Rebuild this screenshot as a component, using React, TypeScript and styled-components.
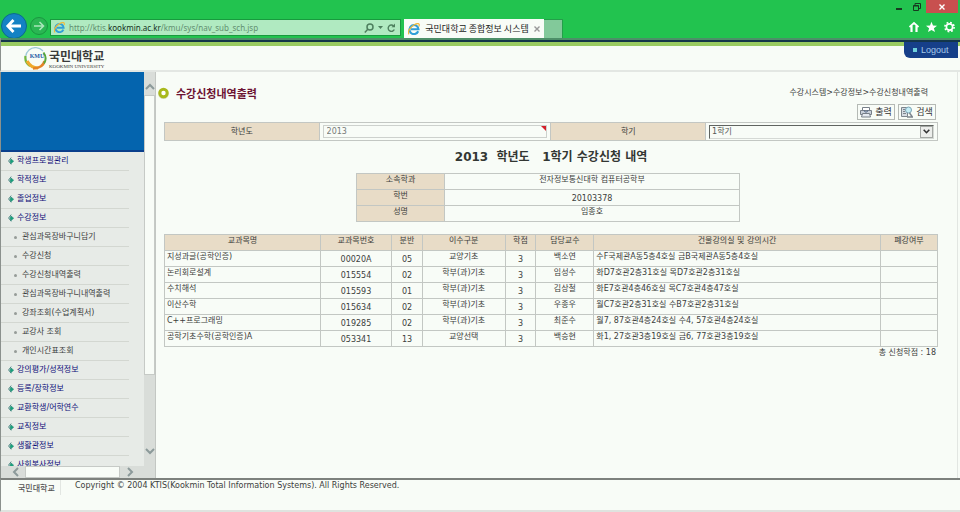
import React from "react";
import styled, { createGlobalStyle } from "styled-components";

const GlobalStyle = createGlobalStyle`
  *, *::before, *::after { box-sizing: border-box; }
  html, body, #root { height: 100%; margin: 0; }
  body {
    background: #f8fcf7;
    color: #3c403c;
    font: 8px/12px "DejaVu Sans", "Noto Sans CJK KR", sans-serif;
    overflow: hidden;
  }
  button, input, select { font: inherit; color: inherit; margin: 0; padding: 0; border: 0; background: none; }
  a { color: inherit; text-decoration: none; }
  h1, h2, p, ul { margin: 0; padding: 0; font-size: inherit; }
  svg { display: block; flex: none; }
`;

const Window = styled.div`
  display: grid;
  grid-template-rows: 38px 34px minmax(0, 1fr) 34px;
  height: 100vh;
`;

/* ---------- browser frame ---------- */

const Chrome = styled.header`
  display: flex;
  align-items: flex-end;
  justify-content: space-between;
  background: #22c34f;
`;

const NavGroup = styled.div`
  display: flex;
  align-items: flex-end;
  flex: 1;
`;

const RoundButtons = styled.div`
  display: flex;
  align-items: center;
  width: 50px;
  height: 24px;
`;

const IconButton = styled.button`
  display: flex;
  align-items: center;
  justify-content: center;
`;

const AddressBar = styled.div`
  display: flex;
  align-items: center;
  gap: 4px;
  flex: 0 1 351px;
  height: 17px;
  margin-bottom: 2px;
  padding: 0 4px 0 3px;
  background: #b0eac1;
  border: 1px solid #189a3e;
`;

const Url = styled.span`
  flex: 1;
  color: #628f70;
  font: 8px/14px "Noto Sans", sans-serif;
  white-space: nowrap;
  b { color: #14301c; font-weight: 400; }
`;

const Tab = styled.div`
  display: flex;
  align-items: center;
  justify-content: space-between;
  width: 140px;
  height: 19px;
  margin-left: 3px;
  padding: 0 4px;
  background: #f8fcf7;
  color: #222;
  font-size: 9px;
  font-family: "Noto Sans CJK KR", sans-serif;
  white-space: nowrap;
`;

const NewTab = styled.button`
  width: 19px;
  height: 19px;
  background: #82c99a;
  border: 1px solid #249f4a;
  border-width: 1px 1px 0 0;
`;

const WindowTools = styled.div`
  display: flex;
  flex-direction: column;
  justify-content: space-between;
  align-items: flex-end;
  align-self: stretch;
  padding: 0 2px 5px 0;
`;

const ToolRow = styled.div<{ $gap: number }>`
  display: flex;
  align-items: center;
  gap: ${(p) => p.$gap}px;
  padding-right: ${(p) => (p.$gap > 5 ? 3 : 0)}px;
`;

const CaptionButton = styled(IconButton)<{ $close?: boolean }>`
  width: ${(p) => (p.$close ? 32 : 18)}px;
  height: 13px;
  background: ${(p) => (p.$close ? "#c8504f" : "none")};
`;

/* ---------- site header ---------- */

const SiteHeader = styled.div`
  display: flex;
  justify-content: space-between;
  align-items: flex-start;
  border-left: 1px solid #8b918d;
  border-bottom: 2px solid #e3e7e3;
  padding-right: 2px;
  background: linear-gradient(#4d8f68 0 2px, #14364a 2px 4px, #9acb62 4px 8px, #f8fcf7 8px);
`;

const Brand = styled.a`
  display: flex;
  align-items: center;
  gap: 2px;
  padding: 9px 0 0 23px;
`;

const BrandText = styled.span`
  display: flex;
  flex-direction: column;
  color: #3a3a3a;
`;

const BrandName = styled.span`
  font: 700 12px/16px "Noto Sans CJK KR", sans-serif;
`;

const BrandSub = styled.span`
  font: 5px/6px "Liberation Serif", serif;
`;

const Logout = styled.a`
  display: flex;
  align-items: center;
  gap: 4px;
  width: 54px;
  height: 16px;
  margin-top: 4px;
  padding-left: 9px;
  border-bottom-left-radius: 6px;
  background: #163f89;
  color: #a5c9ea;
  font: 9px/14px "Liberation Sans", sans-serif;
`;

const LogoutDot = styled.i`
  width: 4px;
  height: 4px;
  background: #6fd0dc;
`;

/* ---------- body ---------- */

const Body = styled.div`
  display: grid;
  grid-template-columns: 155px minmax(0, 1fr);
  min-height: 0;
  border-left: 1px solid #8b918d;
`;

const SideFrame = styled.aside`
  display: grid;
  grid-template-columns: minmax(0, 1fr) 11px;
  grid-template-rows: minmax(0, 1fr) 12px;
  min-height: 0;
  background: #d9ddd9;
  border-right: 1px solid #c3c7c3;
`;

const SideScroll = styled.nav`
  overflow: hidden;
  background: #e7ebe7;
`;

const Banner = styled.div`
  height: 80px;
  background: #0464ae;
  border-bottom: 2px solid #0a3f8c;
`;

const Menu = styled.ul`
  list-style: none;
  width: 128px;
`;

const MenuItem = styled.li<{ $sub?: boolean }>`
  height: 19px;
  border-bottom: 1px solid #d3d7d1;
  a {
    display: flex;
    align-items: center;
    gap: ${(p) => (p.$sub ? 5 : 3)}px;
    height: 18px;
    padding-left: ${(p) => (p.$sub ? 13 : 7)}px;
    color: ${(p) => (p.$sub ? "#3c403e" : "#0c0c78")};
    white-space: nowrap;
  }
`;

const SubDot = styled.i`
  width: 3px;
  height: 3px;
  border-radius: 2px;
  background: #969c98;
`;

const VScroll = styled.div`
  display: grid;
  grid-template-rows: 23px 280px minmax(0, 1fr) 30px;
  button:first-child { padding-top: 6px; }
`;

const HScroll = styled.div`
  display: grid;
  grid-template-columns: 24px 95px 20px;
  button:first-child { padding-left: 6px; }
`;

const Thumb = styled.div`
  background: #f8fcf7;
  border: 1px solid #c6cac6;
`;

const Content = styled.main`
  padding: 14px 19px 0 8px;
  margin-right: 2px;
  border-right: 1px solid #e2e6e2;
  min-width: 0;
`;

const TitleRow = styled.div`
  display: flex;
  justify-content: space-between;
  align-items: center;
  height: 14px;
  margin-left: -6px;
  padding-right: 10px;
`;

const PageTitle = styled.h1`
  display: flex;
  align-items: center;
  gap: 7px;
  color: #6c1232;
  font: 700 11px/14px "Noto Sans CJK KR", sans-serif;
`;

const Actions = styled.div`
  display: flex;
  justify-content: flex-end;
  gap: 3px;
  padding: 4px 2px 0 0;
`;

const ActionButton = styled.button`
  display: flex;
  align-items: center;
  justify-content: center;
  gap: 3px;
  width: 38px;
  height: 16px;
  border: 1px solid #b5bab5;
  color: #333;
  font-size: 9px;
`;

const Grid = styled.table<{ $top?: number }>`
  width: 100%;
  margin-top: ${(p) => p.$top ?? 0}px;
  border-collapse: collapse;
  table-layout: fixed;
  th, td {
    padding: 0 2px;
    border: 1px solid #c3c7c3;
    white-space: nowrap;
    font-weight: 400;
    text-align: center;
  }
  th { background: #e8dcc7; }
`;

const StudentWrap = styled.div`
  width: 50%;
  margin: 8px auto 0;
`;

const Report = styled.section`
  padding-right: 6px;
`;

const FormRow = styled.tr`
  height: 18px;
`;

const Row = styled.tr`
  height: 16px;
`;

const Cell = styled.td<{ $left?: boolean; $number?: boolean }>`
  && {
    text-align: ${(p) => (p.$left ? "left" : "center")};
    vertical-align: ${(p) => (p.$number ? "bottom" : "top")};
  }
`;

const YearBox = styled.div`
  display: flex;
  justify-content: space-between;
  height: 13px;
  margin: 0 1px;
  border: 1px solid #cdd1cd;
`;

const YearInput = styled.input`
  flex: 1;
  min-width: 0;
  padding-left: 3px;
  color: #777b77;
`;

const TermBox = styled.div`
  display: flex;
  position: relative;
  height: 14px;
  margin: 0 1px;
  border: 1px solid #d5d9d5;
  border-top-color: #606460;
  border-left-color: #606460;
`;

const TermSelect = styled.select`
  appearance: none;
  width: 100%;
  padding-left: 2px;
  color: #555955;
`;

const TermArrow = styled.span`
  position: absolute;
  top: 0;
  right: 0;
  display: flex;
  align-items: center;
  justify-content: center;
  width: 13px;
  height: 12px;
  border: 1px solid #a4a8a4;
  background: #eceeeb;
  pointer-events: none;
`;

const ReportTitle = styled.h2`
  margin-top: 8px;
  color: #333733;
  font: 700 12px/16px "DejaVu Sans", "Noto Sans CJK KR", sans-serif;
  text-align: center;
  white-space: pre;
`;

const Total = styled.p`
  padding: 0 2px;
  text-align: right;
`;

const Footer = styled.footer`
  display: flex;
  align-items: flex-start;
  gap: 14px;
  border-left: 1px solid #8b918d;
  border-top: 2px solid #7d817d;
  border-bottom: 2px solid #dfe3df;
  padding-left: 17px;
`;

const FooterBrand = styled.span`
  width: 43px;
  padding-top: 3px;
  border-right: 1px solid #e2e6e2;
  color: #555;
  font-weight: 500;
`;

const IeLogo = ({ size }: { size: number }) => (
  <svg width={size} height={size} viewBox="0 0 16 16" fill="none">
    <path d="M13.600 11A6 6 0 1 1 14 8.300H4" stroke="#2f9fd8" strokeWidth="2.800" />
    <path d="M1.500 15C-1.500 12 3 5 9 2c5-2.500 7-1 5.500 2.500" stroke="#f0b93a" strokeWidth="1.700" />
  </svg>
);

const Chevron = ({ turn }: { turn: number }) => (
  <svg width="10" height="10" viewBox="0 0 10 10" fill="none">
    <path d="M1 7L5 3L9 7" transform={`rotate(${turn} 5 5)`} stroke="#8c9a9a" strokeWidth="2" />
  </svg>
);

const Diamond = () => (
  <svg width="6" height="8" viewBox="0 0 6 8" fill="none">
    <path d="M3.200 .6L.6 4L3.200 7.400" stroke="#3f7f7c" strokeWidth=".9" />
    <path d="M3 2L5.600 4.200L3 6.600L2 4.200Z" fill="#14a37a" stroke="#2a8a78" strokeWidth=".7" />
  </svg>
);

const menu: { label: string; sub?: boolean }[] = [
  { label: "학생프로필관리" },
  { label: "학적정보" },
  { label: "졸업정보" },
  { label: "수강정보" },
  { label: "관심과목장바구니담기", sub: true },
  { label: "수강신청", sub: true },
  { label: "수강신청내역출력", sub: true },
  { label: "관심과목장바구니내역출력", sub: true },
  { label: "강좌조회(수업계획서)", sub: true },
  { label: "교강사 조회", sub: true },
  { label: "개인시간표조회", sub: true },
  { label: "강의평가/성적정보" },
  { label: "등록/장학정보" },
  { label: "교환학생/어학연수" },
  { label: "교직정보" },
  { label: "생활관정보" },
  { label: "사회봉사정보" },
];

const student = [
  ["소속학과", "전자정보통신대학 컴퓨터공학부"],
  ["학번", "20103378"],
  ["성명", "임종호"],
];

const headings = [
  { label: "교과목명", width: 156 },
  { label: "교과목번호", width: 71 },
  { label: "분반", width: 31 },
  { label: "이수구분", width: 83 },
  { label: "학점", width: 31 },
  { label: "담당교수", width: 58 },
  { label: "건물강의실 및 강의시간", width: 287 },
  { label: "폐강여부", width: 57 },
];

const ColWidth = styled.col<{ $share: number }>`
  width: ${(p) => p.$share}%;
`;

const courses = [
  ["지성과글(공학인증)", "00020A", "05", "교양기초", "3", "백소연", "수F국제관A동5층4호실 금B국제관A동5층4호실", ""],
  ["논리회로설계", "015554", "02", "학부(과)기초", "3", "임성수", "화D7호관2층31호실 목D7호관2층31호실", ""],
  ["수치해석", "015593", "01", "학부(과)기초", "3", "김상철", "화E7호관4층46호실 목C7호관4층47호실", ""],
  ["이산수학", "015634", "02", "학부(과)기초", "3", "우종우", "월C7호관2층31호실 수B7호관2층31호실", ""],
  ["C++프로그래밍", "019285", "02", "학부(과)기초", "3", "최준수", "월7, 87호관4층24호실 수4, 57호관4층24호실", ""],
  ["공학기초수학(공학인증)A", "053341", "13", "교양선택", "3", "백승현", "화1, 27호관3층19호실 금6, 77호관3층19호실", ""],
];

export default function App() {
  return (
    <>
      <GlobalStyle />
      <Window>
        <Chrome>
          <NavGroup>
            <RoundButtons>
              <IconButton aria-label="뒤로">
                <svg width="28" height="26" viewBox="0 0 28 26" fill="none">
                  <circle cx="14" cy="13" r="12.500" fill="#1482c4" stroke="#0c6a8c" />
                  <path d="M21 13H8M13.500 7L7.800 13L13.500 19" stroke="#fff" strokeWidth="2.800" />
                </svg>
              </IconButton>
              <IconButton aria-label="앞으로">
                <svg width="22" height="20" viewBox="0 0 22 20" fill="none">
                  <circle cx="11" cy="10" r="8.500" fill="#2ab653" stroke="#1a9640" />
                  <path d="M6 10H15M11.500 6L15.500 10L11.500 14" stroke="#a9e6ba" strokeWidth="1.600" />
                </svg>
              </IconButton>
            </RoundButtons>
            <AddressBar>
              <IeLogo size={11} />
              <Url>
                http://ktis.<b>kookmin.ac.kr</b>/kmu/sys/nav_sub_sch.jsp
              </Url>
              <IconButton aria-label="검색">
                <svg width="10" height="10" viewBox="0 0 10 10" fill="none" stroke="#4d7f5e" strokeWidth="1.500">
                  <circle cx="6" cy="4" r="3" />
                  <path d="M4 6L.8 9.400" />
                </svg>
              </IconButton>
              <svg width="5" height="3" viewBox="0 0 5 3">
                <path d="M0 0H5L2.500 3Z" fill="#4d7f5e" />
              </svg>
              <IconButton aria-label="새로 고침">
                <svg width="9" height="10" viewBox="0 0 9 10" fill="none">
                  <path d="M7.300 6.500A3.200 3.200 0 1 1 6.500 2.800" stroke="#4d7f5e" strokeWidth="1.400" />
                  <path d="M8 .5V4.200H4.500Z" fill="#4d7f5e" />
                </svg>
              </IconButton>
            </AddressBar>
            <Tab>
              <IeLogo size={12} />
              <span>국민대학교 종합정보 시스템</span>
              <IconButton aria-label="탭 닫기">
                <svg width="6" height="6" viewBox="0 0 6 6" stroke="#999" strokeWidth="1.400">
                  <path d="M.5 .5L5.500 5.500M5.500 .5L.5 5.500" />
                </svg>
              </IconButton>
            </Tab>
            <NewTab aria-label="새 탭" />
          </NavGroup>
          <WindowTools>
            <ToolRow $gap={0}>
              <CaptionButton aria-label="최소화">
                <svg width="6" height="6" viewBox="0 0 6 6">
                  <path d="M0 4H6V6H0Z" fill="#173a20" />
                </svg>
              </CaptionButton>
              <CaptionButton aria-label="이전 크기로">
                <svg width="8" height="8" viewBox="0 0 8 8" fill="none" stroke="#173a20">
                  <path d="M.5 2.500H5.500V7.500H.5ZM.5 3H5.500M2 2V.5H7.500V5.500H6" />
                </svg>
              </CaptionButton>
              <CaptionButton $close aria-label="닫기">
                <svg width="6" height="6" viewBox="0 0 6 6" stroke="#fff" strokeWidth="1.400">
                  <path d="M.5 .5L5.500 5.500M5.500 .5L.5 5.500" />
                </svg>
              </CaptionButton>
            </ToolRow>
            <ToolRow $gap={7}>
              <IconButton aria-label="홈">
                <svg width="10" height="12" viewBox="0 0 10 12" fill="none" stroke="#fff">
                  <path d="M.5 6L5 2L9.500 6" strokeWidth="1.800" />
                  <path d="M2.500 5V11M7.500 5V11" strokeWidth="2.200" />
                </svg>
              </IconButton>
              <IconButton aria-label="즐겨찾기">
                <svg width="11" height="12" viewBox="0 0 11 12" fill="#fff">
                  <path d="M5.500 .7L7 4.500L11 4.700L7.900 7.200L9 11L5.500 8.900L2 11L3.100 7.200L0 4.700L4 4.500Z" />
                </svg>
              </IconButton>
              <IconButton aria-label="도구">
                <svg width="11" height="12" viewBox="0 0 11 12" fill="none" stroke="#fff">
                  <circle cx="5.500" cy="6" r="3.100" strokeWidth="1.600" />
                  <circle cx="5.500" cy="6" r="4.600" strokeWidth="1.600" strokeDasharray="1.800 1.813" />
                </svg>
              </IconButton>
            </ToolRow>
          </WindowTools>
        </Chrome>

        <SiteHeader>
          <Brand href="#">
            <svg width="23" height="23" viewBox="0 0 23 23" fill="none">
              <path d="M4 17A9.800 9.800 0 0 1 19 4" stroke="#9ec9d8" strokeWidth="1.200" />
              <path d="M1.500 9A10 10 0 0 0 6 19" stroke="#73b840" strokeWidth="2.200" />
              <path d="M3 14Q7 21 14 21" stroke="#efaa2c" strokeWidth="3.200" />
              <path d="M9 21.500Q19 21 20.500 14" stroke="#e48428" strokeWidth="2.600" />
              <path d="M20 16.500Q23.500 11 19.500 5.500" stroke="#59a83d" strokeWidth="2" />
              <text x="13" y="11" textAnchor="middle" fill="#2459a5" fontFamily="Liberation Serif" fontWeight="700" fontSize="6">KMU</text>
            </svg>
            <BrandText>
              <BrandName>국민대학교</BrandName>
              <BrandSub>KOOKMIN UNIVERSITY</BrandSub>
            </BrandText>
          </Brand>
          <Logout href="#">
            <LogoutDot />
            Logout
          </Logout>
        </SiteHeader>

        <Body>
          <SideFrame>
            <SideScroll>
              <Banner />
              <Menu>
                {menu.map((m) => (
                  <MenuItem key={m.label} $sub={m.sub}>
                    <a href="#">
                      {m.sub ? <SubDot /> : <Diamond />}
                      {m.label}
                    </a>
                  </MenuItem>
                ))}
              </Menu>
            </SideScroll>
            <VScroll>
              <IconButton aria-label="위로"><Chevron turn={0} /></IconButton>
              <Thumb />
              <span />
              <IconButton aria-label="아래로"><Chevron turn={180} /></IconButton>
            </VScroll>
            <HScroll>
              <IconButton aria-label="왼쪽으로"><Chevron turn={270} /></IconButton>
              <Thumb />
              <IconButton aria-label="오른쪽으로"><Chevron turn={90} /></IconButton>
            </HScroll>
          </SideFrame>

          <Content>
            <TitleRow>
              <PageTitle>
                <svg width="11" height="12" viewBox="0 0 11 12" fill="none">
                  <circle cx="5.500" cy="6.700" r="3.800" stroke="#d4d9b4" strokeWidth="3" />
                  <circle cx="5.500" cy="6" r="3.700" fill="#fff" stroke="#a9b91c" strokeWidth="3" />
                </svg>
                수강신청내역출력
              </PageTitle>
              <span>수강시스템&gt;수강정보&gt;수강신청내역출력</span>
            </TitleRow>
            <Actions>
              <ActionButton>
                <svg width="12" height="12" viewBox="0 0 12 12" fill="none" stroke="#777f88">
                  <path d="M2.500 4V1.500H9.500V4" fill="#fff" />
                  <path d="M.5 4.500H11.500V8.500H.5Z" fill="#c9d0da" />
                  <path d="M2.500 7.500H9.500L10.500 11H1.500Z" fill="#e6ebf2" />
                  <path d="M4 4L5 6H7L8 4" stroke="#5c6f8c" />
                </svg>
                출력
              </ActionButton>
              <ActionButton>
                <svg width="12" height="12" viewBox="0 0 12 12" fill="none" stroke="#7c848c">
                  <path d="M.5 1.500H6.500V10.500H.5Z" fill="#d5dbe2" />
                  <path d="M2 3.500H4M2 5.500H4M2 7.500H5" />
                  <circle cx="7.500" cy="4" r="3" fill="#c5eef6" stroke="#7ba4b5" />
                  <path d="M8.500 7L11.500 11H6" strokeWidth="1.500" />
                </svg>
                검색
              </ActionButton>
            </Actions>

            <Grid $top={2}>
              <colgroup>
                <ColWidth $share={20} />
                <ColWidth $share={30} />
                <ColWidth $share={20} />
                <ColWidth $share={30} />
              </colgroup>
              <tbody>
                <FormRow>
                  <th><label htmlFor="year">학년도</label></th>
                  <td>
                    <YearBox>
                      <YearInput id="year" defaultValue="2013" />
                      <svg width="5" height="5" viewBox="0 0 5 5">
                        <path d="M0 0H5V5Z" fill="#d3202a" />
                      </svg>
                    </YearBox>
                  </td>
                  <th><label htmlFor="term">학기</label></th>
                  <td>
                    <TermBox>
                      <TermSelect id="term" defaultValue="1">
                        <option value="1">1학기</option>
                        <option value="2">2학기</option>
                      </TermSelect>
                      <TermArrow>
                        <svg width="7" height="5" viewBox="0 0 7 5" fill="none">
                          <path d="M.7 .7L3.500 3.700L6.300 .7" stroke="#333" strokeWidth="1.600" />
                        </svg>
                      </TermArrow>
                    </TermBox>
                  </td>
                </FormRow>
              </tbody>
            </Grid>

            <ReportTitle>{"2013  학년도   1학기 수강신청 내역"}</ReportTitle>

            <Report>
              <StudentWrap>
                <Grid>
                  <colgroup>
                    <ColWidth $share={23} />
                    <ColWidth $share={77} />
                  </colgroup>
                  <tbody>
                    {student.map(([name, value]) => (
                      <Row key={name}>
                        <Cell as="th" scope="row">{name}</Cell>
                        <Cell $number={name === "학번"}>{value}</Cell>
                      </Row>
                    ))}
                  </tbody>
                </Grid>
              </StudentWrap>
            </Report>

            <Grid $top={12}>
              <colgroup>
                {headings.map((h) => (
                  <ColWidth key={h.label} $share={Math.round((h.width / 774) * 1000) / 10} />
                ))}
              </colgroup>
              <thead>
                <Row>
                  {headings.map((h) => (
                    <Cell as="th" scope="col" key={h.label}>{h.label}</Cell>
                  ))}
                </Row>
              </thead>
              <tbody>
                {courses.map((course) => (
                  <Row key={course[1]}>
                    {course.map((value, i) => (
                      <Cell key={i} $left={i === 0 || i === 6} $number={i === 1 || i === 2 || i === 4}>
                        {value}
                      </Cell>
                    ))}
                  </Row>
                ))}
              </tbody>
            </Grid>
            <Total>총 신청학점 : 18</Total>
          </Content>
        </Body>

        <Footer>
          <FooterBrand>국민대학교</FooterBrand>
          <span>Copyright © 2004 KTIS(Kookmin Total Information Systems). All Rights Reserved.</span>
        </Footer>
      </Window>
    </>
  );
}
